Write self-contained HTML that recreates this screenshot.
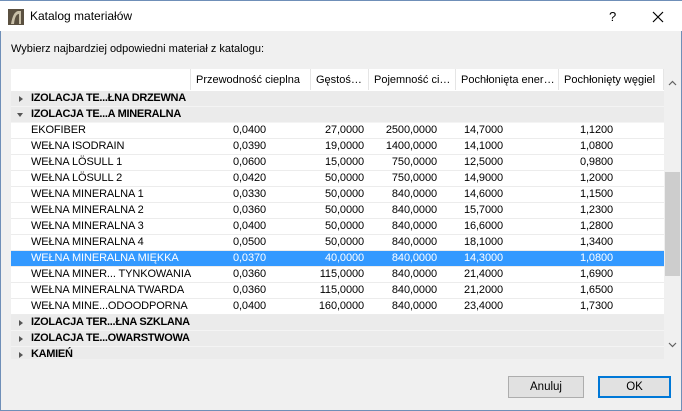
<!DOCTYPE html>
<html><head><meta charset="utf-8"><style>
*{margin:0;padding:0;box-sizing:border-box}
body{width:682px;height:411px;overflow:hidden;font-family:"Liberation Sans","DejaVu Sans",sans-serif;font-size:11px;color:#000;background:#f0f0f0;position:relative}
.win{position:absolute;left:0;top:0;width:682px;height:411px;border:1px solid #6f8fb8;border-top:none}
.title{position:absolute;left:0;top:0;width:682px;height:31px;background:#fff;border-top:1px solid #6f8fb8}
.title .t{position:absolute;left:30px;top:8px;font-size:12px}
.abs{position:absolute;white-space:nowrap}
.tbl{position:absolute;left:11px;top:69px;width:670px;height:290px;background:#fff;overflow:hidden}
.hdr{position:absolute;left:0;top:0;height:21px;width:653px;background:#fff}
.hc{position:absolute;top:0;height:21px;border-left:1px solid #e5e5e5;padding:5px 3px 0 5px;font-size:11px;overflow:hidden;white-space:nowrap;text-overflow:ellipsis}
.row{position:absolute;left:0;width:653px;height:16px;border-bottom:1px solid #ececec;background:#fff;letter-spacing:-0.1px}
.g{background:#ebebeb;border-bottom:1px solid #f4f4f4;font-weight:bold;letter-spacing:-0.3px}
.row span{position:absolute;top:1px;white-space:nowrap}
.sel{background:#3399ff;color:#fff}
.tri{position:absolute;left:8px;top:5px;width:0;height:0;border-left:4px solid #555;border-top:3.5px solid transparent;border-bottom:3.5px solid transparent}
.trid{position:absolute;left:6px;top:6px;width:0;height:0;border-top:4px solid #555;border-left:3.5px solid transparent;border-right:3.5px solid transparent}
.sb{position:absolute;left:653px;top:0;width:17px;height:290px;background:#f0f0f0}
.btn{position:absolute;height:22px;background:#e1e1e1;border:1px solid #adadad;text-align:center;line-height:20px;font-size:11.5px}
</style></head><body>
<div class="win"></div>
<div class="title">
<svg class="abs" style="left:8px;top:8px" width="16" height="16"><rect width="16" height="16" fill="#5a5040"/><path d="M3 15 Q5 3 10 2 L13 2 L13 15 L11 15 L11 5 Q7 5 6 15Z" fill="#c8bfa8"/></svg>
<div class="t">Katalog materiałów</div>
<div class="abs" style="left:609px;top:8px;font-size:13px">?</div>
<svg class="abs" style="left:652px;top:10px" width="12" height="12"><path d="M1 1L11 11M11 1L1 11" stroke="#000" stroke-width="1.2"/></svg>
</div>
<div class="abs" style="left:11px;top:43px">Wybierz najbardziej odpowiedni materiał z katalogu:</div>
<div class="tbl">
<div class="hdr">
<div class="hc" style="left:179px;width:120px">Przewodność cieplna</div>
<div class="hc" style="left:299px;width:58px">Gęstość kg</div>
<div class="hc" style="left:357px;width:87px">Pojemność cieplna</div>
<div class="hc" style="left:444px;width:103px">Pochłonięta energia</div>
<div class="hc" style="left:547px;width:106px;border-right:1px solid #e5e5e5">Pochłonięty węgiel</div>
</div>
<div class="row g" style="top:22px"><div class="tri"></div><span style="left:20px">IZOLACJA TE...ŁNA DRZEWNA</span></div>
<div class="row g" style="top:38px"><div class="trid"></div><span style="left:20px">IZOLACJA TE...A MINERALNA</span></div>
<div id="rows"></div>
<div class="row g" style="top:246px"><div class="tri"></div><span style="left:20px">IZOLACJA TER...ŁNA SZKLANA</span></div>
<div class="row g" style="top:262px"><div class="tri"></div><span style="left:20px">IZOLACJA TE...OWARSTWOWA</span></div>
<div class="row g" style="top:278px"><div class="tri"></div><span style="left:20px">KAMIEŃ</span></div>
<div class="sb">
<svg class="abs" style="left:4px;top:11px" width="9" height="6"><path d="M1 5L4.5 1.5L8 5" stroke="#606060" fill="none" stroke-width="1.2"/></svg>
<div class="abs" style="left:1px;top:103px;width:15px;height:104px;background:#cdcdcd"></div>
<svg class="abs" style="left:4px;top:273px" width="9" height="6"><path d="M1 1L4.5 4.5L8 1" stroke="#606060" fill="none" stroke-width="1.2"/></svg>
</div>
</div>
<div class="btn" style="left:508px;top:376px;width:76px">Anuluj</div>
<div class="btn" style="left:598px;top:376px;width:73px;border:2px solid #0078d7;line-height:18px">OK</div>
<script>
var d=[["EKOFIBER","0,0400","27,0000","2500,0000","14,7000","1,1200"],
["WEŁNA ISODRAIN","0,0390","19,0000","1400,0000","14,1000","1,0800"],
["WEŁNA LÖSULL 1","0,0600","15,0000","750,0000","12,5000","0,9800"],
["WEŁNA LÖSULL 2","0,0420","50,0000","750,0000","14,9000","1,2000"],
["WEŁNA MINERALNA 1","0,0330","50,0000","840,0000","14,6000","1,1500"],
["WEŁNA MINERALNA 2","0,0360","50,0000","840,0000","15,7000","1,2300"],
["WEŁNA MINERALNA 3","0,0400","50,0000","840,0000","16,6000","1,2800"],
["WEŁNA MINERALNA 4","0,0500","50,0000","840,0000","18,1000","1,3400"],
["WEŁNA MINERALNA MIĘKKA","0,0370","40,0000","840,0000","14,3000","1,0800"],
["WEŁNA MINER... TYNKOWANIA","0,0360","115,0000","840,0000","21,4000","1,6900"],
["WEŁNA MINERALNA TWARDA","0,0360","115,0000","840,0000","21,2000","1,6500"],
["WEŁNA MINE...ODOODPORNA","0,0400","160,0000","840,0000","23,4000","1,7300"]];
var r=[255,353,426,492,602],h="";
d.forEach(function(x,i){h+='<div class="row'+(i==8?' sel':'')+'" style="top:'+(54+i*16)+'px"><span style="left:20px">'+x[0]+'</span>';
for(var j=1;j<6;j++)h+='<span style="right:'+(653-r[j-1])+'px">'+x[j]+'</span>';h+='</div>';});
document.getElementById('rows').outerHTML=h;
</script>
</body></html>
